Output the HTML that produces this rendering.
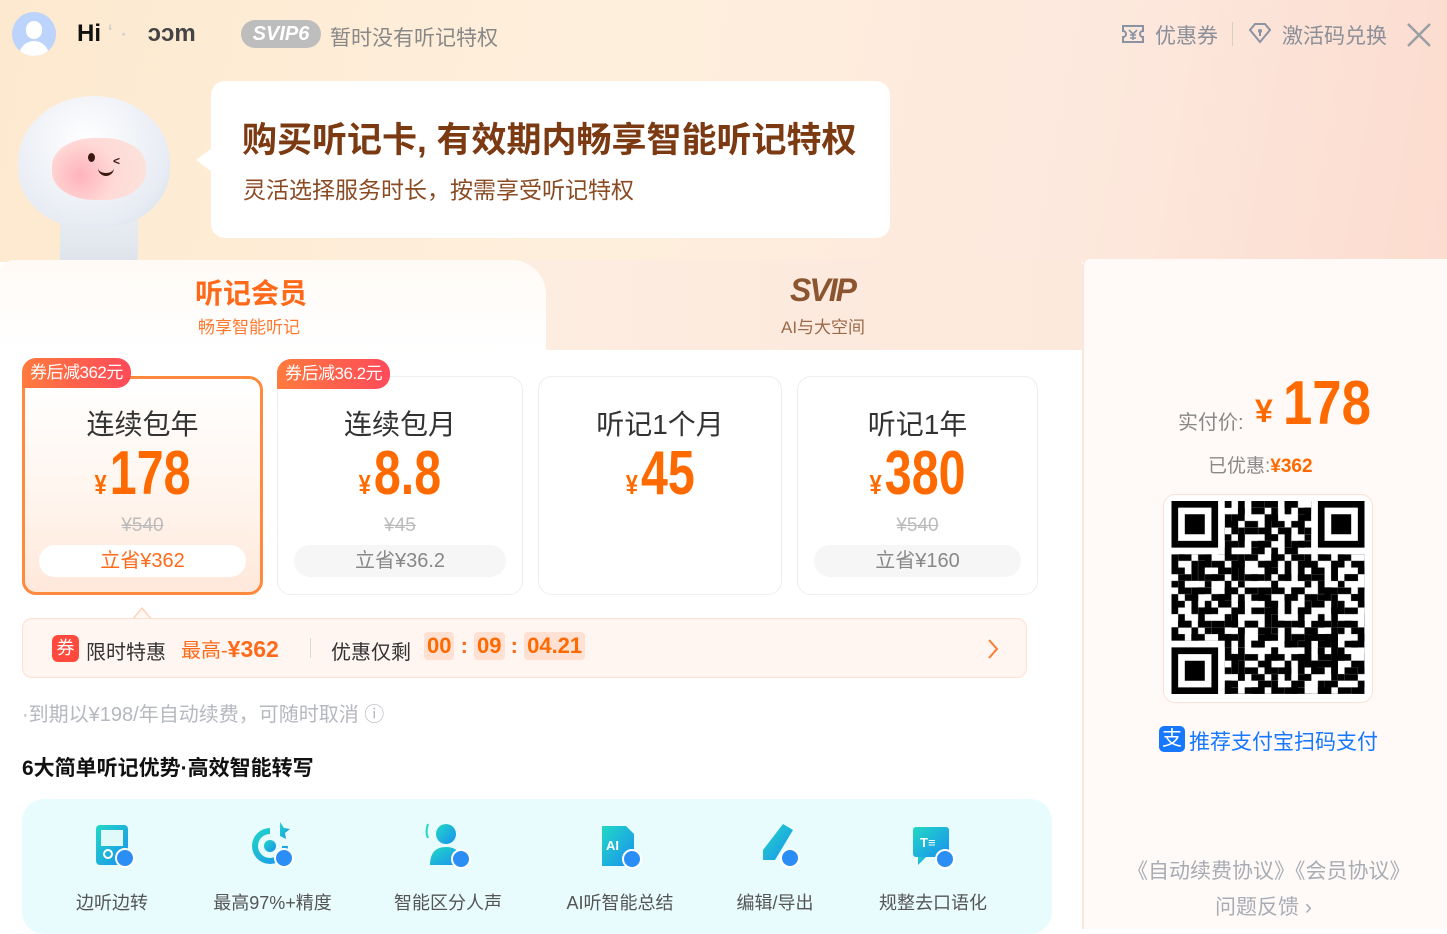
<!DOCTYPE html>
<html><head><meta charset="utf-8">
<style>
*{margin:0;padding:0;box-sizing:border-box}
body{width:1447px;height:929px;overflow:hidden;font-family:"Liberation Sans","Noto Sans CJK SC",sans-serif;position:relative;background:#fff}
.abs{position:absolute}
.hdr{left:0;top:0;width:1447px;height:262px;background:linear-gradient(100deg,#fde9cf 0%,#feefdc 40%,#fde8dd 75%,#fcdccf 100%)}
.narrow{font-weight:bold;display:inline-block;transform:scaleX(0.78);transform-origin:center}
.card{top:376px;height:219px;border:1px solid #eeeeee;border-radius:14px;background:#fff;text-align:center}
.card .t{position:absolute;top:26px;left:0;right:0;font-size:28px;color:#333}
.card .p{position:absolute;top:62px;left:0;right:0;color:#ff6a00;font-size:62px;line-height:70px;white-space:nowrap}
.card .p span{font-size:28px;margin-right:4px}
.card .o{position:absolute;top:138px;left:0;right:0;color:#bbb;font-size:19px;text-decoration:line-through}
.card .s{position:absolute;top:168px;left:16px;right:16px;height:32px;border-radius:16px;background:#f6f6f7;color:#888;font-size:20px;line-height:32px}
.badge{top:358px;height:30px;border-radius:14px 14px 14px 0;background:linear-gradient(90deg,#ff7a3d,#ff4a5a);color:#fff;font-size:17px;line-height:30px;padding:0 8px;letter-spacing:-0.5px}
.feat{text-align:center;font-size:18px;color:#555}
.tm{display:inline-block;background:#ffe1d3;color:#ff6a00;border-radius:4px;padding:0 3px;height:28px;line-height:28px}
</style></head><body>
<div class="abs hdr"></div>
<div class="abs" style="left:12px;top:12px;width:44px;height:44px;border-radius:50%;background:#bcd3fb;overflow:hidden">
<div class="abs" style="left:14px;top:9px;width:16px;height:18px;border-radius:8px;background:#fff"></div>
<div class="abs" style="left:7px;top:29px;width:30px;height:20px;border-radius:15px 15px 0 0;background:#fff"></div></div>
<div class="abs" style="left:77px;top:20px;font-size:24px;font-weight:bold;color:#111">Hi <span style="color:#ccc;font-weight:normal">‘ ·&nbsp;&nbsp;&nbsp;</span><span style="color:#444">ɔɔm</span></div>
<div class="abs" style="left:241px;top:20px;width:80px;height:28px;border-radius:14px;background:#bdbdbd;color:#fff;font-style:italic;font-weight:bold;font-size:20px;line-height:28px;text-align:center">SVIP6</div>
<div class="abs" style="left:330px;top:22px;font-size:21px;color:#888">暂时没有听记特权</div>
<svg class="abs" style="left:1121px;top:23px" width="24" height="22" viewBox="0 0 24 22"><path d="M2 3h20v5a3 3 0 0 0 0 6v5H2v-5a3 3 0 0 0 0-6z" fill="none" stroke="#8a93a3" stroke-width="2"/><path d="M8 7l4 4 4-4M12 11v6M9 12h6M9 15h6" stroke="#8a93a3" stroke-width="1.6" fill="none"/></svg>
<div class="abs" style="left:1155px;top:20px;font-size:21px;color:#8a8f99">优惠券</div>
<div class="abs" style="left:1232px;top:22px;width:1px;height:24px;background:#d9cfc8"></div>
<svg class="abs" style="left:1248px;top:22px" width="24" height="22" viewBox="0 0 24 22"><path d="M2 8l5-6h10l5 6-10 12z" fill="none" stroke="#8a93a3" stroke-width="2"/><circle cx="12" cy="9" r="2" fill="#8a93a3"/><path d="M12 10v4" stroke="#8a93a3" stroke-width="2"/></svg>
<div class="abs" style="left:1282px;top:20px;font-size:21px;color:#8a8f99">激活码兑换</div>
<svg class="abs" style="left:1406px;top:22px" width="26" height="26" viewBox="0 0 26 26"><path d="M2 2l22 22M24 2L2 24" stroke="#9a9ea6" stroke-width="2.5"/></svg>
<!-- mascot -->
<div class="abs" style="left:60px;top:195px;width:78px;height:65px;border-radius:30px 30px 0 0;background:linear-gradient(#eef1f6,#dfe4ec)"></div>
<div class="abs" style="left:18px;top:96px;width:152px;height:132px;border-radius:50% 50% 45% 45%;background:radial-gradient(circle at 45% 35%,#ffffff,#e7ebf3 70%,#d3dae6)"></div>
<div class="abs" style="left:52px;top:138px;width:94px;height:62px;border-radius:45%;background:radial-gradient(circle at 30% 60%,#ffb3bc,#ffd9d6 45%,#fbe4dc)"></div>
<div class="abs" style="left:88px;top:153px;width:7px;height:9px;border-radius:50%;background:#3a1a10"></div>
<div class="abs" style="left:113px;top:154px;font-size:12px;font-weight:bold;color:#3a1a10">&lt;</div>
<div class="abs" style="left:98px;top:168px;width:16px;height:8px;border-bottom:3px solid #3a1a10;border-radius:0 0 10px 10px"></div>
<!-- bubble -->
<div class="abs" style="left:196px;top:148px;width:0;height:0;border-top:12px solid transparent;border-bottom:12px solid transparent;border-right:16px solid #fff"></div>
<div class="abs" style="left:211px;top:81px;width:679px;height:157px;border-radius:14px;background:#fff"></div>
<div class="abs" style="left:242px;top:112px;font-size:35px;font-weight:bold;color:#7b3a12">购买听记卡, 有效期内畅享智能听记特权</div>
<div class="abs" style="left:243px;top:171px;font-size:23px;color:#8a4a22">灵活选择服务时长，按需享受听记特权</div>
<!-- left panel -->
<div class="abs" style="left:0;top:260px;width:1082px;height:669px;background:#fff;border-radius:14px 0 0 0"></div>
<div class="abs" style="left:500px;top:260px;width:582px;height:90px;background:linear-gradient(90deg,#fdece0,#fde9dc)"></div>
<div class="abs" style="left:0;top:260px;width:546px;height:92px;background:linear-gradient(180deg,#fffaf6,#fff);border-radius:14px 34px 0 0"></div>
<div class="abs" style="left:195px;top:272px;font-size:28px;font-weight:bold;color:#ff6a1a">听记会员</div>
<div class="abs" style="left:198px;top:313px;font-size:17px;color:#ff7a30">畅享智能听记</div>
<div class="abs" style="left:790px;top:272px;font-size:32px;font-weight:bold;font-style:italic;color:#8a5530;letter-spacing:-2px">SVIP</div>
<div class="abs" style="left:781px;top:313px;font-size:17px;color:#9a6a4a">AI与大空间</div>
<!-- cards -->
<div class="abs card" style="left:22px;width:241px;border:3px solid #ff8a3d;background:linear-gradient(180deg,#fff 0%,#fff4ec 60%,#ffe7da 100%)">
<div class="t" style="top:24px">连续包年</div><div class="p" style="top:60px"><b class="narrow"><span>¥</span>178</b></div><div class="o" style="top:136px">¥540</div><div class="s" style="top:166px;left:14px;right:14px;background:#fff;color:#ff6a1a">立省¥362</div></div>
<div class="abs card" style="left:277px;width:246px"><div class="t">连续包月</div><div class="p"><b class="narrow"><span>¥</span>8.8</b></div><div class="o">¥45</div><div class="s">立省¥36.2</div></div>
<div class="abs card" style="left:538px;width:244px"><div class="t">听记1个月</div><div class="p"><b class="narrow"><span>¥</span>45</b></div></div>
<div class="abs card" style="left:797px;width:241px"><div class="t">听记1年</div><div class="p"><b class="narrow"><span>¥</span>380</b></div><div class="o">¥540</div><div class="s">立省¥160</div></div>
<div class="abs badge" style="left:22px">券后减362元</div>
<div class="abs badge" style="left:277px;top:359px">券后减36.2元</div>
<!-- promo -->
<svg class="abs" style="left:131px;top:606px" width="22" height="14"><path d="M1 14L11 2l10 12" fill="#fff7f2" stroke="#ffd2bd" stroke-width="1.5"/></svg>
<div class="abs" style="left:22px;top:618px;width:1005px;height:60px;border:1px solid #fde0d0;border-radius:10px;background:#fff6f1"></div>
<div class="abs" style="left:52px;top:635px;width:27px;height:27px;border-radius:6px;background:#ff4a3d;color:#fff;font-size:18px;line-height:27px;text-align:center">券</div>
<div class="abs" style="left:86px;top:636px;font-size:20px;color:#333">限时特惠</div>
<div class="abs" style="left:181px;top:634px;font-size:20px;color:#ff6a1a">最高-<b style="font-size:23px">¥362</b></div>
<div class="abs" style="left:310px;top:638px;width:1px;height:20px;background:#e8d6cc"></div>
<div class="abs" style="left:331px;top:636px;font-size:20px;color:#333">优惠仅剩</div>
<div class="abs" style="left:424px;top:632px;font-size:22px;font-weight:bold;color:#ff6a1a"><span class="tm">00</span> : <span class="tm">09</span> : <span class="tm">04.21</span></div>
<svg class="abs" style="left:986px;top:638px" width="14" height="22"><path d="M3 2l8 9-8 9" fill="none" stroke="#ff7a30" stroke-width="2"/></svg>
<div class="abs" style="left:22px;top:698px;font-size:20px;color:#b5b8c0">·到期以¥198/年自动续费，可随时取消 ⓘ</div>
<div class="abs" style="left:22px;top:752px;font-size:21px;font-weight:bold;color:#111">6大简单听记优势·高效智能转写</div>
<!-- features -->
<div class="abs" style="left:22px;top:799px;width:1030px;height:135px;border-radius:22px;background:#e9fcfd"></div>
<svg class="abs" style="left:0;top:820px" width="1060" height="50">
<defs><linearGradient id="g" x1="0" y1="0" x2="1" y2="1"><stop offset="0" stop-color="#21d8c4"/><stop offset="1" stop-color="#1a8ff0"/></linearGradient></defs>
<g fill="url(#g)">
<rect x="96" y="5" width="32" height="40" rx="4"/>
<path d="M270 8a18 18 0 1 0 18 18h-6a12 12 0 1 1-12-12z"/><circle cx="270" cy="26" r="6"/><path d="M280 2l4 6 6 1-5 4 1 6-6-3z"/>
<circle cx="446" cy="14" r="10"/><path d="M430 45q0-18 16-18t16 18z"/><path d="M428 4q-3 8 0 14" stroke="#21d8c4" stroke-width="2" fill="none"/>
<path d="M602 6h24l8 8v32h-32z"/>
<path d="M783 4l10 6-18 30h-12v-10z"/>
<rect x="913" y="7" width="36" height="30" rx="3"/><path d="M918 37v8l8-8z"/>
</g>
<g fill="#2a8ef5" stroke="#fff" stroke-width="2"><circle cx="125" cy="38" r="9"/><circle cx="284" cy="38" r="9"/><circle cx="461" cy="39" r="9"/><circle cx="632" cy="39" r="9"/><circle cx="790" cy="38" r="9"/><circle cx="945" cy="39" r="9"/></g>
<g fill="#fff" font-size="13" font-weight="bold" font-family="Liberation Sans"><rect x="101" y="10" width="22" height="16" fill="#dffaf8"/><circle cx="108" cy="34" r="4" fill="none" stroke="#fff" stroke-width="2"/><text x="606" y="30">AI</text><text x="920" y="27">T≡</text></g>
</svg>
<div class="abs feat" style="left:52px;top:889px;width:120px">边听边转</div>
<div class="abs feat" style="left:200px;top:889px;width:145px">最高97%+精度</div>
<div class="abs feat" style="left:383px;top:889px;width:130px">智能区分人声</div>
<div class="abs feat" style="left:555px;top:889px;width:130px">AI听智能总结</div>
<div class="abs feat" style="left:720px;top:889px;width:110px">编辑/导出</div>
<div class="abs feat" style="left:868px;top:889px;width:130px">规整去口语化</div>
<!-- right panel -->
<div class="abs" style="left:1082px;top:259px;width:365px;height:670px;background:#fffaf8;border-left:2px solid #fbe6dc;border-radius:8px 0 0 0"></div>
<div class="abs" style="left:1178px;top:406px;font-size:20px;color:#888">实付价:</div>
<div class="abs" style="left:1255px;top:393px;font-size:32px;font-weight:bold;color:#ff6a00">¥</div>
<div class="abs" style="left:1283px;top:368px;font-size:62px;font-weight:bold;color:#ff6a00;transform:scaleX(0.85);transform-origin:left">178</div>
<div class="abs" style="left:1208px;top:451px;font-size:19px;color:#888">已优惠:<b style="color:#ff6a00">¥362</b></div>
<div class="abs" style="left:1163px;top:494px;width:210px;height:209px;border:1px solid #fbe0d4;border-radius:12px;background:#fff"></div>
<svg class="abs" style="left:1171px;top:501px" width="194" height="193" viewBox="0 0 29 29">
<defs><pattern id="q" width="7" height="5" patternUnits="userSpaceOnUse"><path d="M0 0h2v1H0zM3 0h1v2H3zM5 1h2v1H5zM1 2h1v2H1zM4 3h2v1H4zM0 4h1v1H0zM2 3h1v1H2zM6 4h1v1H6zM3 4h1v1H3z"/></pattern><pattern id="q2" width="5" height="7" patternUnits="userSpaceOnUse"><path d="M0 1h1v2H0zM2 0h2v1H2zM1 4h2v1H1zM4 2h1v3H4zM3 6h2v1H3zM0 5h1v1H0z"/></pattern></defs>
<rect width="29" height="29" fill="url(#q)"/><rect width="29" height="29" fill="url(#q2)"/>
<g><rect x="0" y="0" width="8" height="8" fill="#fff"/><rect x="21" y="0" width="8" height="8" fill="#fff"/><rect x="0" y="21" width="8" height="8" fill="#fff"/>
<path d="M0 0h7v7H0zM1 1v5h5V1zM2 2h3v3H2zM22 0h7v7h-7zM23 1v5h5V1zM24 2h3v3h-3zM0 22h7v7H0zM1 23v5h5v-5zM2 24h3v3H2z" fill-rule="evenodd"/>
<path d="M20 20h5v5h-5zM21 21v3h3v-3zM22 22h1v1h-1z" fill-rule="evenodd"/></g>
</svg>
<div class="abs" style="left:1159px;top:726px;width:26px;height:26px;border-radius:5px;background:#1677ff;color:#fff;font-size:20px;line-height:26px;text-align:center">支</div>
<div class="abs" style="left:1189px;top:726px;font-size:21px;color:#1677ff">推荐支付宝扫码支付</div>
<div class="abs" style="left:1127px;top:855px;font-size:21px;color:#a8acb4">《自动续费协议》《会员协议》</div>
<div class="abs" style="left:1215px;top:891px;font-size:21px;color:#a8acb4">问题反馈 ›</div>
</body></html>
